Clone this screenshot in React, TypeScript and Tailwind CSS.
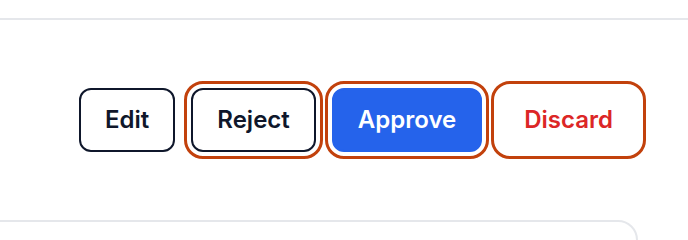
export default function App() {
  return (
    <div className="w-[688px] h-[240px] overflow-hidden bg-white font-['Inter',sans-serif]">
      <div className="h-5 border-b-2 border-gray-200" />
      <div className="flex justify-end gap-4 pr-[49px] py-[68px]">
        <button className="px-6 py-4 rounded-xl border-2 border-slate-900 text-2xl leading-7 font-semibold text-slate-900">
          Edit
        </button>
        <button className="px-6 py-4 rounded-xl border-2 border-slate-900 text-2xl leading-7 font-semibold text-slate-900 outline-[3px] outline-solid outline-offset-4 outline-[#c2410c]">
          Reject
        </button>
        <button className="px-6 py-4 rounded-xl border-2 border-[#2563eb] bg-[#2563eb] text-2xl leading-7 font-semibold text-white outline-[3px] outline-solid outline-offset-4 outline-[#c2410c]">
          Approve
        </button>
        <button className="px-6 py-4 rounded-xl border-2 border-white text-2xl leading-7 font-semibold text-[#dc2626] outline-[3px] outline-solid outline-offset-4 outline-[#c2410c]">
          Discard
        </button>
      </div>
      <div className="-ml-6 w-[662px] h-40 rounded-[20px] border-2 border-gray-200" />
    </div>
  );
}
